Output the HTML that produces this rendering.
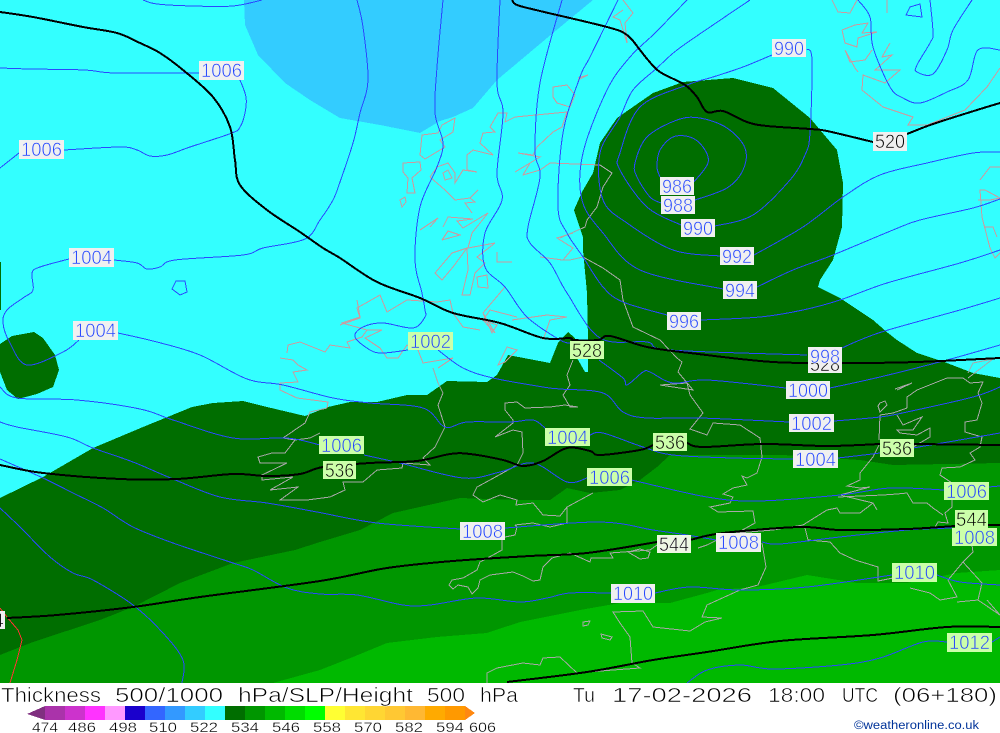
<!DOCTYPE html>
<html><head><meta charset="utf-8"><title>Thickness</title>
<style>
html,body{margin:0;padding:0;background:#fff;width:1000px;height:733px;overflow:hidden}
svg{display:block}
text{font-family:"Liberation Sans",sans-serif}
.l{font-size:19px;fill:#2244ff;stroke-width:.6px}
.k{font-size:19px;fill:#000;stroke-width:.6px}
.w{stroke:#f0f0f0}
.g{stroke:#ccffaa}
.iso *{fill:none;stroke:#2a48ff;stroke-width:1;shape-rendering:crispEdges}
.h *{fill:none;stroke:#000;stroke-width:2;shape-rendering:crispEdges}
.cp polyline,.cp polygon{fill:none;stroke:#cc9a9e;stroke-width:1;shape-rendering:crispEdges}
.cg polyline,.cg polygon{fill:none;stroke:#a8a8a8;stroke-width:1;shape-rendering:crispEdges}
</style></head><body>
<svg width="1000" height="733" viewBox="0 0 1000 733" xmlns="http://www.w3.org/2000/svg">
<rect width="1000" height="733" fill="#fff"/>
<g shape-rendering="crispEdges">
<rect width="1000" height="683" fill="#33ffff"/>
<polygon fill="#33ccff" points="244,0 245,25 258,55 285,83 310,100 340,118 380,125 420,133 440,121 453,117 473,108 497,80 553,33 593,0"/>
<rect x="0" y="262" width="1" height="48" fill="#006e00"/>
<polygon fill="#006e00" points="0,344 12,336 34,332 43,338 55,355 59,370 53,387 37,394 18,399 7,390 0,372"/>
<polygon fill="#006e00" points="0,498 43,477 93,448 143,427 192,407 213,403 243,401 267,407 305,416 328,407 350,402 377,402 407,395 427,395 447,381 487,382 497,375 508,355 550,363 558,343 568,332 575,338 577,358 585,372 588,372 588,340 587,293 583,250 583,237 574,210 582,192 593,173 600,143 617,118 653,93 683,82 733,78 773,88 810,118 837,150 843,183 842,227 833,260 820,280 818,287 840,298 873,320 888,333 897,340 917,353 947,363 973,373 1000,378 1000,683 0,683"/>
<polygon fill="#009600" points="0,655 33,642 100,620 133,607 180,583 233,563 295,550 320,542 360,530 393,513 460,498 517,500 550,500 567,488 590,493 620,490 640,480 657,467 670,455 750,455 783,455 860,460 893,465 1000,463 1000,683 0,683"/>
<polygon fill="#00b900" points="273,683 320,670 353,657 387,643 437,637 487,633 520,622 580,610 620,603 670,603 707,593 717,590 757,587 807,575 857,583 907,583 957,573 1000,570 1000,683"/>
</g>

<g class="cp">
<polygon points="455,118 442,125 438,133 422,135 420,155 425,159 445,147 440,140 453,132"/>
<polygon points="403,163 420,162 421,170 412,178 415,193 407,193 408,178 403,172"/>
<polygon points="400,200 405,197 406,202 402,207"/>
<polyline points="430,177 437,167 448,163 455,173 455,183 463,170 477,172 467,170 467,155 473,150 493,155 480,143 483,133 495,132 490,127 498,113 507,113 505,122 515,117 567,112 562,127 553,132 537,147 533,155 518,153 540,157 530,163 515,172 530,163 523,175 540,170 550,163 600,165"/>
<polyline points="430,177 445,190 455,200 470,198 478,190 470,198 475,202 465,203 472,213"/>
<polygon points="553,87 567,85 575,95 570,107 557,103 553,97"/>
<polyline points="578,78 588,75 578,80"/>
<polyline points="420,230 438,218 430,227"/>
<polyline points="443,227 448,217 473,219 457,221 463,228 488,213 472,233 468,248 495,243 477,257 485,263 475,273 470,295 462,295 468,270 467,248 452,253 435,273 442,280 453,267 467,248"/>
<polyline points="442,240 460,235 448,231 442,240"/>
<polygon points="477,277 487,275 488,288 478,287"/>
<polyline points="497,252 497,262 512,262"/>
<polyline points="505,287 483,313 495,333 483,320"/>
<polyline points="540,257 563,260 573,248 557,238 573,233"/>
<polyline points="512,320 547,315 567,317 550,320 543,340"/>
<polygon points="443,173 448,170 452,178 445,180"/>
<polyline points="340,325 360,318 357,308 380,295 387,312 407,300 437,302 450,300 453,313 463,327 480,330"/>
<polyline points="357,300 360,317 342,323 367,330 382,330 365,338 380,348 387,358 398,358 407,345 418,350 423,363 453,358 438,368"/>
<polyline points="287,353 288,345 300,342 325,352 330,345 350,348 347,342 362,337 367,330"/>
<polyline points="280,358 293,360 298,365 307,370 293,372 298,382 280,383 280,390 297,398 328,402 327,408"/>
<polyline points="483,313 492,333 497,325 483,320 490,310 517,317"/>
<polygon points="498,365 507,347 517,350 505,362"/>
<polyline points="832,0 838,12 850,13 857,0"/>
<polyline points="842,30 855,25 868,23 862,33 877,32 858,38 857,47 845,43 842,30"/>
<polyline points="887,0 887,13"/>
<polyline points="890,43 882,57 892,55 875,70 900,70 885,83 863,75 862,90 883,107 907,115 913,117 908,125 927,125 965,110 987,87 1000,68"/>
<polyline points="872,50 865,60 850,62 845,50 855,68 858,72"/>
<polyline points="980,180 990,167 1000,167"/>
<polyline points="978,200 990,200 1000,198 985,190 980,190 982,217 990,248 995,258 1000,253"/>
<polyline points="985,227 993,227 997,237"/>
<polyline points="623,0 633,13 625,23 627,43 620,20 613,17 623,10"/>
</g>

<g class="cg">
<polyline points="600,165 612,173 603,187 597,207 587,220 585,227 560,238"/>
<polyline points="560,260 570,260 583,257 603,268 620,280 623,300 633,327 660,340 677,358 682,362 678,372 693,390 660,385 687,383 690,395 703,413 690,429 707,435 713,423 740,425 760,438 762,457 757,473 747,478 742,476 747,485 733,488 723,494 733,497 730,503 710,507 718,512 753,511 755,523 737,533 717,540 707,545 698,548"/>
<polyline points="762,543 766,567 758,585 740,590 707,605 702,617 722,618 705,622 690,631 653,627 643,611 613,612 620,623 630,637 632,663 640,668 613,670 577,673 560,657 543,658 540,665 523,663 497,668 487,673 487,683"/>
<polygon points="583,622 590,621 588,625 583,626"/>
<polygon points="601,634 612,637 610,640 602,638"/>
<polyline points="880,443 873,457 860,473 860,480 847,486 860,488 870,487 840,495 873,503 877,510"/>
<polyline points="803,525 827,510 837,508 840,513 860,513 873,503"/>
<polyline points="838,497 883,495 897,494 907,493 913,503 927,503 933,508 943,515"/>
<polyline points="803,525 773,530 737,533"/>
<polyline points="805,528 808,540 830,542 840,553 855,560 878,567 878,581 893,578 907,570"/>
<polyline points="910,588 930,593 940,600 957,597 948,580 963,562 973,552 972,545"/>
<polyline points="963,562 982,583 978,600 957,602"/>
<polyline points="987,600 1000,615 978,600"/>
<polygon points="880,403 885,401 887,405 880,412 878,406"/>
<polyline points="895,389 912,383 897,390"/>
<polyline points="907,408 907,397 917,390 947,378 963,378 970,383 983,382 978,393 982,403 977,420 965,422 965,432 982,437 980,447 970,453 975,460 960,467 942,468 940,475 952,483 952,507 945,513 948,523 938,522 935,527"/>
<polyline points="968,373 973,363 993,359 968,378"/>
<polyline points="880,415 893,413 907,408"/>
<polyline points="880,415 879,440"/>
<polyline points="897,415 903,425 922,417 913,430 897,430 900,433 917,435 930,428 930,437 913,447"/>
<polyline points="327,408 310,412 305,423 283,438 295,440 285,453 272,453 258,457 260,463 287,463 262,475 262,480 293,477 270,490 298,487 280,500 307,500 330,497 345,490 343,482 363,482 377,470 402,468 403,463 430,465 423,458 435,447 445,427 438,405 443,393 438,383 433,368"/>
<polyline points="320,433 310,438 295,440"/>
<polyline points="573,360 567,375 570,385 563,395 570,407 578,407 565,405 550,407 525,408 517,402 505,403 505,410 513,420 513,423 495,437 513,430 522,432 523,453 517,465 490,480 477,487 473,495 483,502 500,495 517,500 516,505 533,503 543,515 560,516 567,507 593,493"/>
<polyline points="515,525 533,523 550,527 567,523 567,507"/>
<polyline points="505,537 515,535 517,527 515,525"/>
<polyline points="502,540 502,550 493,555 480,562 477,570 463,578 452,580 449,585 453,589 458,585 468,587 472,594 478,588 480,580 490,575 513,572 523,576 533,581 540,580 543,567 552,558 570,553 590,562 591,558 613,558 610,553 650,550 657,545"/>
<polygon points="628,552 640,549 650,552 648,558 640,559"/>
</g>

<polyline points="0,608 7,617 18,630 22,640 17,660 10,683" fill="none" stroke="#ff3333" stroke-width="1" shape-rendering="crispEdges"/>

<g class="iso">
<polyline points="143,0 157,4 193,6 233,6 262,0"/>
<polyline points="0,68 30,69 85,70 115,73 199,73"/>
<polyline points="240,80 246,97 245,113 240,127 232,133 190,147 167,155 150,156 137,150 120,147 64,150"/>
<polyline points="19,153 0,168"/>
<polyline points="69,259 40,267 32,273 33,290 23,298 7,310 3,323 10,343 27,365 63,352 79,340"/>
<polyline points="114,260 137,263 147,269 160,267 175,260 243,255 263,248 305,239 320,220 333,200 340,182 353,143 360,113 368,80 363,27 357,0"/>
<polygon points="172,289 176,281 185,281 187,292 180,295"/>
<polyline points="118,333 157,342 200,355 247,379 283,385 333,398 370,403 423,408 445,427 467,422 510,422 533,420 545,428"/>
<polyline points="408,350 383,353 370,350 355,337 363,327 383,323 413,328 425,317 425,310 422,293 415,260 420,207 437,167 443,143 435,113 437,67 443,0"/>
<polyline points="438,350 463,368 493,378 543,387 560,389 603,393 623,412 647,418 700,418 789,422"/>
<polyline points="0,387 17,398 77,400 140,409 173,420 233,438 287,438 320,445"/>
<polyline points="364,455 400,463 463,478 500,472 533,463 567,482 587,478"/>
<polyline points="632,480 640,482 707,497 757,501 840,495 890,488 944,490"/>
<polyline points="989,487 1000,486"/>
<polyline points="0,422 17,427 67,437 93,448 133,462 173,479 220,497 267,503 317,512 377,523 460,529"/>
<polyline points="505,528 600,522 653,530 687,535 716,540"/>
<polyline points="762,542 780,544 840,537 907,530 952,528"/>
<polyline points="0,459 43,478 73,493 103,508 133,527 173,543 233,563 253,570 287,588 320,594 357,595 403,605 430,605 477,598 520,602 547,598 570,593 611,593"/>
<polyline points="655,593 690,587 740,590 807,587 892,575"/>
<polyline points="937,575 960,582 1000,585"/>
<polyline points="0,508 20,527 50,557 73,573 93,580 133,605 163,633 183,660 182,683"/>
<polyline points="687,683 707,670 740,665 773,669 840,665 880,658 923,642 947,642"/>
<polyline points="992,642 1000,637"/>
<polyline points="500,0 497,83 503,113 497,173 502,200 485,233 485,267 505,287 527,317 560,340 571,343"/>
<polyline points="562,0 540,83 535,150 540,177 528,227 530,243 550,263 567,293 600,338 647,342 670,350 807,355"/>
<polyline points="842,348 860,340 888,330 960,310 1000,298"/>
<polyline points="618,0 590,57 580,77 563,133 558,207 567,233 583,257 603,287 623,302 667,315"/>
<polyline points="701,320 760,317 803,310 840,300 887,283 960,263 1000,250"/>
<polyline points="687,0 655,33 630,57 607,90 583,153 582,200 603,233 640,270 723,289"/>
<polyline points="757,287 793,270 833,255 893,230 920,220 973,208 1000,199"/>
<polyline points="750,0 713,25 677,50 657,68 633,90 620,117 600,153 603,200 627,223 673,250 720,256"/>
<polyline points="754,255 803,227 843,197 880,175 927,163 973,153 1000,152"/>
<polyline points="772,55 743,67 713,77 687,85 640,107 620,153 620,170 647,207 681,225"/>
<polyline points="715,226 753,215 790,180 805,155 810,133 812,60 807,49"/>
<polyline points="661,203 650,197 637,177 635,163 647,137 677,120 700,118 727,128 745,148 743,170 727,188 695,200"/>
<polyline points="693,183 708,163 703,147 690,137 673,137 660,150 657,167 660,177"/>
<polyline points="930,0 933,33 930,43 917,65 917,72 933,74 947,50 953,30 972,0"/>
<polygon points="906,15 910,7 920,4 922,17"/>
<polyline points="858,0 870,17 873,47 890,87 903,98 920,103 947,92 968,80 978,50 1000,50"/>
<polyline points="599,360 623,378 627,385 643,372 650,372 673,383 707,380 786,388"/>
<polyline points="830,388 880,377 947,360 1000,345"/>
<polyline points="834,421 880,417 907,412 973,397 1000,387"/>
<polyline points="590,435 603,433 643,447 673,455 733,458 793,459"/>
<polyline points="838,458 880,453 913,448 1000,433"/>
</g>

<g class="h">
<polyline points="0,12 33,17 83,27 117,33 140,43 160,53 183,70 213,97 230,127 235,160 240,185 267,210 300,232 323,248 340,258 377,282 420,298 453,313 500,323 543,338 570,338 573,340 598,340 610,336 647,347 690,353 773,362 850,363 917,362 1000,358"/>
<polyline points="512,0 517,5 540,11 607,27 627,35 640,50 648,60 660,72 685,85 697,97 707,112 723,111 747,122 767,126 810,129 827,131 873,142"/>
<polyline points="907,134 933,124 977,110 1000,103"/>
<polyline points="0,465 43,473 120,479 177,479 233,474 267,476 300,474 323,467 370,463 417,461 450,454 470,454 503,460 523,466 543,461 567,448 590,451 600,455 640,450 653,445"/>
<polyline points="687,443 703,447 763,444 827,446 880,444"/>
<polyline points="914,444 1000,445"/>
<polyline points="7,618 57,615 133,607 200,597 320,581 387,568 453,561 530,556 587,553 657,542"/>
<polyline points="690,540 723,533 800,527 840,530 907,529 955,526"/>
<polyline points="988,525 1000,525"/>
<polyline points="507,682 587,672 653,660 707,652 780,641 873,635 947,627 1000,627"/>
</g>

<g shape-rendering="crispEdges">
<rect x="0" y="611" width="5" height="18" fill="#f0f0f0"/>
<rect x="199" y="61" width="45" height="19" fill="#f0f0f0"/>
<rect x="19" y="140" width="45" height="19" fill="#f0f0f0"/>
<rect x="69" y="248" width="45" height="19" fill="#f0f0f0"/>
<rect x="73" y="321" width="45" height="19" fill="#f0f0f0"/>
<rect x="772" y="39" width="34" height="18" fill="#f0f0f0"/>
<rect x="873" y="132" width="34" height="19" fill="#f0f0f0"/>
<rect x="660" y="177" width="34" height="18" fill="#f0f0f0"/>
<rect x="661" y="196" width="34" height="18" fill="#f0f0f0"/>
<rect x="681" y="219" width="34" height="18" fill="#f0f0f0"/>
<rect x="720" y="247" width="34" height="18" fill="#f0f0f0"/>
<rect x="723" y="281" width="34" height="18" fill="#f0f0f0"/>
<rect x="667" y="312" width="34" height="18" fill="#f0f0f0"/>
<rect x="570" y="341" width="34" height="18" fill="#ccffaa"/>
<rect x="808" y="355" width="34" height="18" fill="#f0f0f0"/>
<rect x="786" y="381" width="44" height="18" fill="#f0f0f0"/>
<rect x="789" y="414" width="45" height="18" fill="#f0f0f0"/>
<rect x="793" y="450" width="45" height="18" fill="#f0f0f0"/>
<rect x="944" y="482" width="45" height="18" fill="#ccffaa"/>
<rect x="955" y="510" width="33" height="18" fill="#ccffaa"/>
<rect x="952" y="528" width="45" height="18" fill="#ccffaa"/>
<rect x="880" y="439" width="34" height="18" fill="#ccffaa"/>
<rect x="653" y="433" width="34" height="18" fill="#ccffaa"/>
<rect x="657" y="535" width="34" height="18" fill="#eef8e4"/>
<rect x="716" y="533" width="45" height="19" fill="#f0f0f0"/>
<rect x="892" y="563" width="45" height="19" fill="#ccffaa"/>
<rect x="947" y="633" width="45" height="19" fill="#ccffaa"/>
<rect x="611" y="584" width="44" height="19" fill="#f0f0f0"/>
<rect x="460" y="522" width="45" height="18" fill="#f0f0f0"/>
<rect x="408" y="332" width="45" height="18" fill="#ccffaa"/>
<rect x="545" y="428" width="45" height="18" fill="#ccffaa"/>
<rect x="319" y="436" width="45" height="18" fill="#ccffaa"/>
<rect x="323" y="461" width="33" height="18" fill="#ccffaa"/>
<rect x="587" y="468" width="45" height="18" fill="#ccffaa"/>
</g>
<text class="k w" x="810" y="371" textLength="30" lengthAdjust="spacingAndGlyphs">528</text>
<g shape-rendering="crispEdges"><rect x="808" y="347" width="34" height="16" fill="#f0f0f0"/></g>
<g>
<text class="k w" x="-8" y="627" textLength="12" lengthAdjust="spacingAndGlyphs">4</text>
<text class="l w" x="201" y="77" textLength="41" lengthAdjust="spacingAndGlyphs">1006</text>
<text class="l w" x="21" y="156" textLength="41" lengthAdjust="spacingAndGlyphs">1006</text>
<text class="l w" x="71" y="264" textLength="41" lengthAdjust="spacingAndGlyphs">1004</text>
<text class="l w" x="75" y="337" textLength="41" lengthAdjust="spacingAndGlyphs">1004</text>
<text class="l w" x="774" y="55" textLength="30" lengthAdjust="spacingAndGlyphs">990</text>
<text class="k w" x="875" y="148" textLength="30" lengthAdjust="spacingAndGlyphs">520</text>
<text class="l w" x="662" y="193" textLength="30" lengthAdjust="spacingAndGlyphs">986</text>
<text class="l w" x="663" y="212" textLength="30" lengthAdjust="spacingAndGlyphs">988</text>
<text class="l w" x="683" y="235" textLength="30" lengthAdjust="spacingAndGlyphs">990</text>
<text class="l w" x="722" y="263" textLength="30" lengthAdjust="spacingAndGlyphs">992</text>
<text class="l w" x="725" y="297" textLength="30" lengthAdjust="spacingAndGlyphs">994</text>
<text class="l w" x="669" y="328" textLength="30" lengthAdjust="spacingAndGlyphs">996</text>
<text class="k g" x="572" y="357" textLength="30" lengthAdjust="spacingAndGlyphs">528</text>
<text class="l w" x="810" y="363" textLength="30" lengthAdjust="spacingAndGlyphs">998</text>
<text class="l w" x="788" y="397" textLength="40" lengthAdjust="spacingAndGlyphs">1000</text>
<text class="l w" x="791" y="430" textLength="41" lengthAdjust="spacingAndGlyphs">1002</text>
<text class="l w" x="795" y="466" textLength="41" lengthAdjust="spacingAndGlyphs">1004</text>
<text class="l g" x="946" y="498" textLength="41" lengthAdjust="spacingAndGlyphs">1006</text>
<text class="k g" x="956" y="526" textLength="31" lengthAdjust="spacingAndGlyphs">544</text>
<text class="l g" x="954" y="544" textLength="41" lengthAdjust="spacingAndGlyphs">1008</text>
<text class="k g" x="882" y="455" textLength="30" lengthAdjust="spacingAndGlyphs">536</text>
<text class="k g" x="655" y="449" textLength="30" lengthAdjust="spacingAndGlyphs">536</text>
<text class="k w" x="659" y="551" textLength="30" lengthAdjust="spacingAndGlyphs">544</text>
<text class="l w" x="718" y="549" textLength="41" lengthAdjust="spacingAndGlyphs">1008</text>
<text class="l g" x="894" y="579" textLength="41" lengthAdjust="spacingAndGlyphs">1010</text>
<text class="l g" x="949" y="649" textLength="41" lengthAdjust="spacingAndGlyphs">1012</text>
<text class="l w" x="613" y="600" textLength="40" lengthAdjust="spacingAndGlyphs">1010</text>
<text class="l w" x="462" y="538" textLength="41" lengthAdjust="spacingAndGlyphs">1008</text>
<text class="l g" x="410" y="348" textLength="41" lengthAdjust="spacingAndGlyphs">1002</text>
<text class="l g" x="547" y="444" textLength="41" lengthAdjust="spacingAndGlyphs">1004</text>
<text class="l g" x="321" y="452" textLength="41" lengthAdjust="spacingAndGlyphs">1006</text>
<text class="k g" x="325" y="477" textLength="29" lengthAdjust="spacingAndGlyphs">536</text>
<text class="l g" x="589" y="484" textLength="41" lengthAdjust="spacingAndGlyphs">1006</text>
</g>

<rect x="0" y="683" width="1000" height="50" fill="#fff"/>
<g shape-rendering="crispEdges">
<polygon points="27,714 45,706 45,720" fill="#803080"/>
<rect x="45" y="706" width="20" height="14" fill="#aa33aa"/>
<rect x="65" y="706" width="20" height="14" fill="#cc33cc"/>
<rect x="85" y="706" width="20" height="14" fill="#ff33ff"/>
<rect x="105" y="706" width="20" height="14" fill="#ff99ff"/>
<rect x="125" y="706" width="20" height="14" fill="#1a00cc"/>
<rect x="145" y="706" width="20" height="14" fill="#3366ff"/>
<rect x="165" y="706" width="20" height="14" fill="#3399ff"/>
<rect x="185" y="706" width="20" height="14" fill="#33ccff"/>
<rect x="205" y="706" width="20" height="14" fill="#33ffff"/>
<rect x="225" y="706" width="20" height="14" fill="#006e00"/>
<rect x="245" y="706" width="20" height="14" fill="#009600"/>
<rect x="265" y="706" width="20" height="14" fill="#00b900"/>
<rect x="285" y="706" width="20" height="14" fill="#00dc00"/>
<rect x="305" y="706" width="20" height="14" fill="#00ff00"/>
<rect x="325" y="706" width="20" height="14" fill="#ffff33"/>
<rect x="345" y="706" width="20" height="14" fill="#ffe633"/>
<rect x="365" y="706" width="20" height="14" fill="#ffd633"/>
<rect x="385" y="706" width="20" height="14" fill="#ffc833"/>
<rect x="405" y="706" width="20" height="14" fill="#ffb833"/>
<rect x="425" y="706" width="20" height="14" fill="#ffaa00"/>
<rect x="445" y="706" width="20" height="14" fill="#ff9900"/>
<polygon points="465,706 475,713 465,720" fill="#ff8811"/>
</g>
<g fill="#000" stroke="#fff" stroke-width=".6" style="font-size:20px">
<text x="1" y="702" textLength="100" lengthAdjust="spacingAndGlyphs">Thickness</text>
<text x="115" y="702" textLength="108" lengthAdjust="spacingAndGlyphs">500/1000</text>
<text x="238" y="702" textLength="175" lengthAdjust="spacingAndGlyphs">hPa/SLP/Height</text>
<text x="427" y="702" textLength="38" lengthAdjust="spacingAndGlyphs">500</text>
<text x="480" y="702" textLength="38" lengthAdjust="spacingAndGlyphs">hPa</text>
<text x="573" y="702" textLength="22" lengthAdjust="spacingAndGlyphs">Tu</text>
<text x="612" y="702" textLength="140" lengthAdjust="spacingAndGlyphs">17-02-2026</text>
<text x="768" y="702" textLength="57" lengthAdjust="spacingAndGlyphs">18:00</text>
<text x="842" y="702" textLength="36" lengthAdjust="spacingAndGlyphs">UTC</text>
<text x="893" y="702" textLength="104" lengthAdjust="spacingAndGlyphs">(06+180)</text>
</g>
<g fill="#000" stroke="#fff" stroke-width=".3" style="font-size:13.5px">
<text x="32" y="732" textLength="26" lengthAdjust="spacingAndGlyphs">474</text>
<text x="68" y="732" textLength="28" lengthAdjust="spacingAndGlyphs">486</text>
<text x="109" y="732" textLength="28" lengthAdjust="spacingAndGlyphs">498</text>
<text x="149" y="732" textLength="28" lengthAdjust="spacingAndGlyphs">510</text>
<text x="190" y="732" textLength="28" lengthAdjust="spacingAndGlyphs">522</text>
<text x="231" y="732" textLength="28" lengthAdjust="spacingAndGlyphs">534</text>
<text x="272" y="732" textLength="28" lengthAdjust="spacingAndGlyphs">546</text>
<text x="313" y="732" textLength="28" lengthAdjust="spacingAndGlyphs">558</text>
<text x="354" y="732" textLength="28" lengthAdjust="spacingAndGlyphs">570</text>
<text x="395" y="732" textLength="28" lengthAdjust="spacingAndGlyphs">582</text>
<text x="436" y="732" textLength="28" lengthAdjust="spacingAndGlyphs">594</text>
<text x="469" y="732" textLength="27" lengthAdjust="spacingAndGlyphs">606</text>
</g>
<text x="854" y="729" textLength="125" lengthAdjust="spacingAndGlyphs" fill="#003399" style="font-size:11.5px">©weatheronline.co.uk</text>
</svg>
<script>
// Smooth the isolines with Catmull-Rom curves; the polylines stay as the fallback.
document.querySelectorAll('.iso polyline,.h polyline').forEach(function(e){
  var p=e.getAttribute('points').trim().split(/\s+/).map(function(s){return s.split(',').map(Number)});
  var d='M'+p[0][0]+' '+p[0][1];
  for(var i=0;i<p.length-1;i++){
    var a=p[Math.max(i-1,0)],b=p[i],c=p[i+1],f=p[Math.min(i+2,p.length-1)];
    d+='C'+(b[0]+(c[0]-a[0])/6)+' '+(b[1]+(c[1]-a[1])/6)+' '+(c[0]-(f[0]-b[0])/6)+' '+(c[1]-(f[1]-b[1])/6)+' '+c[0]+' '+c[1];
  }
  var n=document.createElementNS('http://www.w3.org/2000/svg','path');
  n.setAttribute('d',d);
  e.parentNode.replaceChild(n,e);
});
</script>
</body></html>
